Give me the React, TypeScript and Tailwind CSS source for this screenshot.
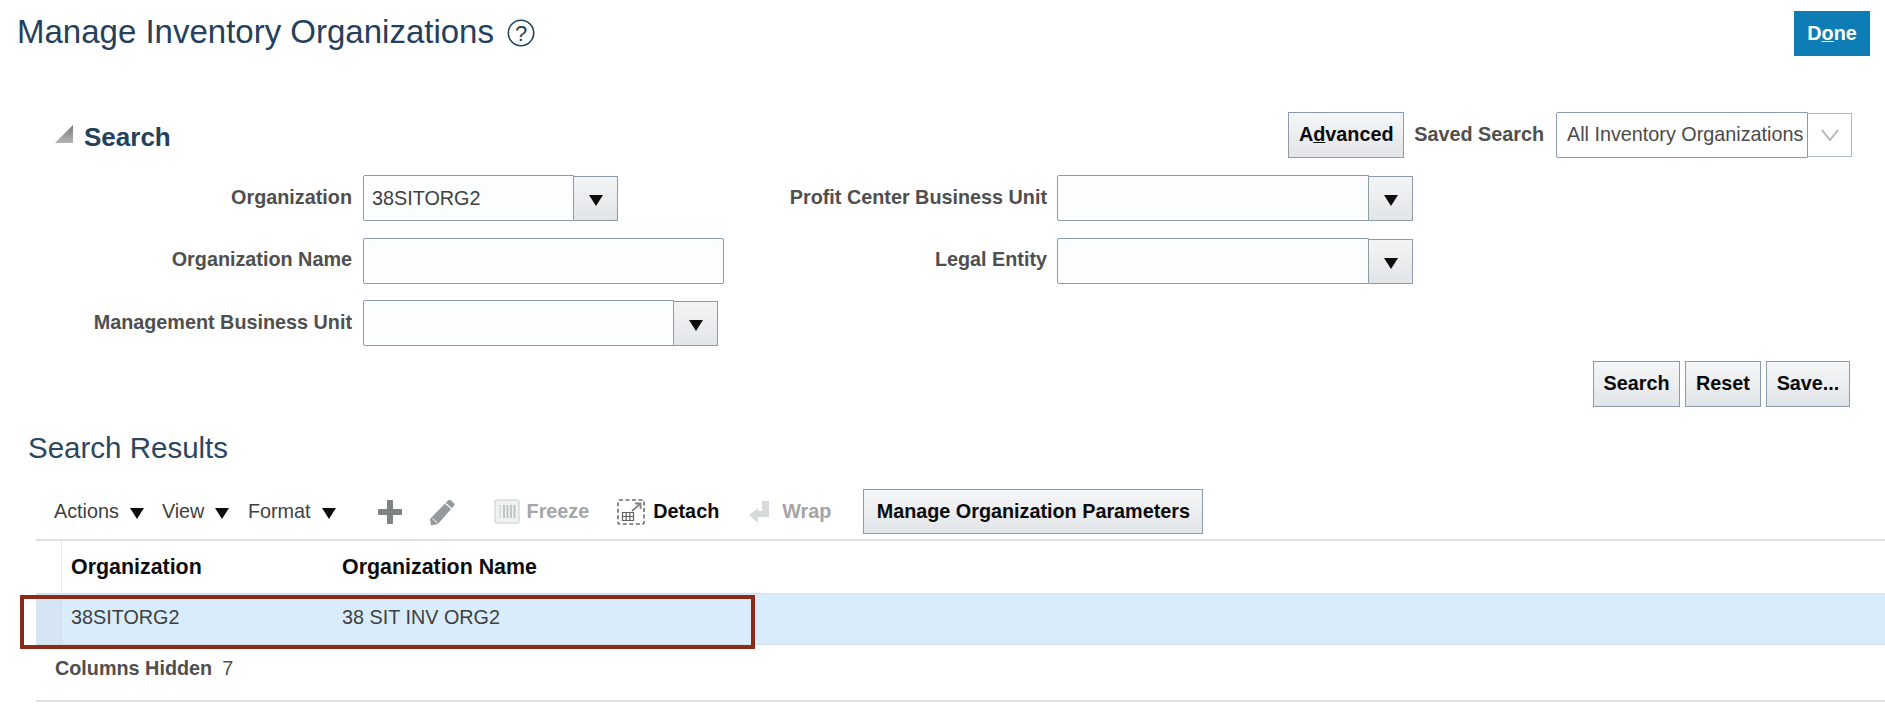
import type { ReactNode } from "react"

const btn =
  "flex items-center justify-center border border-[#8b9bab] bg-gradient-to-b from-[#f5f6f7] to-[#e2e5e8] text-[19.8px] font-bold text-[#0a0a0a]"

function Caret({ className = "" }: { className?: string }) {
  return (
    <svg width="14" height="11" viewBox="0 0 14 11" className={className}>
      <polygon points="0,0 14,0 7,11" fill="#0c0c0c" />
    </svg>
  )
}

function Combo({ inputW, value = "" }: { inputW: string; value?: string }) {
  return (
    <div className="flex h-[46px] items-center">
      <input
        readOnly
        defaultValue={value}
        className={`h-[46px] ${inputW} rounded-l-[2px] border border-[#8b9bab] bg-[#fbfdfe] px-2 text-[19.8px] text-[#3f3f3f]`}
      />
      <div className="flex h-[45px] w-[44px] items-center justify-center border border-l-0 border-[#8b9bab] bg-gradient-to-b from-[#f3f4f5] to-[#e2e5e8]">
        <Caret className="mt-1" />
      </div>
    </div>
  )
}

function Field({
  label,
  labelW,
  children,
  className = "",
}: {
  label: string
  labelW: string
  children: ReactNode
  className?: string
}) {
  return (
    <div className={`flex h-[46px] items-center gap-[11px] ${className}`}>
      <label className={`${labelW} text-right text-[19.8px] font-bold text-[#4f4f4f]`}>{label}</label>
      {children}
    </div>
  )
}

function Menu({ label }: { label: string }) {
  return (
    <span className="flex items-center gap-[11px] text-[19.8px] text-[#3f3f3f]">
      {label}
      <Caret className="mt-1" />
    </span>
  )
}

export default function App() {
  return (
    <div className="h-[724px] w-full overflow-hidden bg-white font-['Liberation_Sans',Arial,sans-serif]">
      {/* Page header */}
      <div className="flex h-[56px] items-start justify-between pl-[17px] pr-[15px] pt-[11px]">
        <div className="flex items-center gap-[13px]">
          <h1 className="-mt-[2px] text-[33px] leading-[45px] font-normal text-[#24405c]">
            Manage Inventory Organizations
          </h1>
          <svg width="28" height="28" viewBox="0 0 28 28">
            <circle cx="14" cy="14" r="12.7" fill="none" stroke="#24405c" strokeWidth="1.6" />
            <text x="14" y="21.5" textAnchor="middle" fontSize="22" fill="#24405c" fontFamily="Liberation Sans">
              ?
            </text>
          </svg>
        </div>
        <button className="h-[45px] w-[76px] bg-[#0f7db5] text-[19.8px] font-bold text-white">
          D<span className="underline">o</span>ne
        </button>
      </div>

      {/* Search */}
      <div className="mt-[56px] flex h-[46px] items-center justify-between pl-[55px] pr-[33px]">
        <div className="flex h-[46px] items-center gap-[11px]">
          <svg width="18" height="18" viewBox="0 0 18 18" className="-mt-[2px]">
            <defs>
              <linearGradient id="tri" x1="0" y1="0" x2="0" y2="1">
                <stop offset="0" stopColor="#7a7a7a" />
                <stop offset="1" stopColor="#b4b4b4" />
              </linearGradient>
            </defs>
            <polygon points="18,0 18,18 0,18" fill="url(#tri)" />
          </svg>
          <h2 className="mt-[4px] text-[26px] font-bold text-[#23405c]">Search</h2>
        </div>
        <div className="flex items-center">
          <button className={`${btn} h-[46px] w-[116px]`}>
            A<span className="underline">d</span>vanced
          </button>
          <span className="ml-[10px] text-[19.8px] font-bold text-[#4f4f4f]">Saved Search</span>
          <div className="ml-[12px] flex h-[46px] items-center">
            <div className="flex h-[46px] w-[252px] items-center rounded-l-[2px] border border-[#8b9bab] bg-white pl-[10px] text-[19.8px] text-[#4a4a4a]">
              All Inventory Organizations
            </div>
            <div className="flex h-[44px] w-[44px] items-center justify-center border border-l-0 border-[#a9b5c0]">
              <svg width="20" height="14" viewBox="0 0 20 14">
                <path d="M2 2 L10 12 L18 2" fill="none" stroke="#b0b8bf" strokeWidth="2" />
              </svg>
            </div>
          </div>
        </div>
      </div>

      <div className="mt-[17px] flex">
        <div className="flex w-[740px] flex-col gap-[16px]">
          <Field label="Organization" labelW="w-[352px]" className="mb-[1px]">
            <Combo inputW="w-[211px]" value="38SITORG2" />
          </Field>
          <Field label="Organization Name" labelW="-mt-[2px] w-[352px]">
            <input readOnly className="h-[46px] w-[361px] rounded-[2px] border border-[#8b9bab] bg-[#fbfdfe]" />
          </Field>
          <Field label="Management Business Unit" labelW="w-[352px]">
            <Combo inputW="w-[311px]" />
          </Field>
        </div>
        <div className="flex flex-col gap-[16px]">
          <Field label="Profit Center Business Unit" labelW="w-[307px] -mr-px" className="mb-[1px]">
            <Combo inputW="w-[312px]" />
          </Field>
          <Field label="Legal Entity" labelW="-mt-[2px] w-[307px] -mr-px">
            <Combo inputW="w-[312px]" />
          </Field>
        </div>
      </div>

      <div className="mt-[15px] flex justify-end gap-[5px] pr-[35px]">
        <button className={`${btn} h-[46px] w-[87px]`}>Search</button>
        <button className={`${btn} h-[46px] w-[76px]`}>Reset</button>
        <button className={`${btn} h-[46px] w-[84px]`}>Save...</button>
      </div>

      {/* Search Results */}
      <h2 className="mt-[24px] pl-[28px] text-[29.5px] leading-[33px] font-normal text-[#2a475f]">Search Results</h2>

      <div className="ml-[36px] mt-[25px]">
        <div className="flex h-[50px] items-start pl-[18px]">
          <div className="flex h-[45px] items-center">
            <Menu label="Actions" />
            <span className="w-[18px]" />
            <Menu label="View" />
            <span className="w-[18.500px]" />
            <Menu label="Format" />
            <svg width="26" height="26" viewBox="0 0 26 26" className="ml-[41px]">
              <path
                d="M10 2a1 1 0 0 1 1-1h4a1 1 0 0 1 1 1v8h8a1 1 0 0 1 1 1v4a1 1 0 0 1-1 1h-8v8a1 1 0 0 1-1 1h-4a1 1 0 0 1-1-1v-8H2a1 1 0 0 1-1-1v-4a1 1 0 0 1 1-1h8z"
                fill="#7f8283"
              />
            </svg>
            <svg width="28" height="28" viewBox="0 0 28 28" className="ml-[25px]">
              <path d="M20 2.500a2 2 0 0 1 2.800-.2l3 2.600a2 2 0 0 1 .2 2.800L10 26l-7 1.500L2 21z" fill="#969a9c" />
              <path d="M17.500 5.500l6 5" stroke="#fff" strokeWidth="1.200" />
              <path d="M4.500 20.500l5 4.500" stroke="#fff" strokeWidth="1" />
            </svg>
            <svg width="26" height="25" viewBox="0 0 26 25" className="ml-[38px]">
              <rect x="1" y="1" width="24" height="23" rx="2" fill="#f0f1f1" stroke="#d9dbdb" strokeWidth="1.500" />
              <path d="M6 6v13" stroke="#cfd2d2" strokeWidth="1.500" strokeDasharray="2 1" />
              <path d="M10 6v13M13.500 6v13M17 6v13M20.500 6v13" stroke="#bcbfbf" strokeWidth="1.800" />
            </svg>
            <span className="ml-[7px] text-[19.8px] font-bold text-[#a3a5a6]">Freeze</span>
            <svg width="28" height="26" viewBox="0 0 28 26" className="ml-[28px]">
              <rect x="1" y="1" width="26" height="24" rx="1" fill="none" stroke="#6a6d6e" strokeWidth="1.600" strokeDasharray="4 2.500" />
              <path d="M15 12l8-7" fill="none" stroke="#7f8283" strokeWidth="1.800" />
              <path d="M18 4.500h5.500v5.500" fill="none" stroke="#7f8283" strokeWidth="1.800" />
              <path d="M5.500 13.500h11v8h-11zM5.500 17.500h11M9.200 13.500v8M12.900 13.500v8" fill="none" stroke="#5f6263" strokeWidth="1.200" />
            </svg>
            <span className="ml-[8px] text-[19.8px] font-bold text-[#0c0c0c]">Detach</span>
            <svg width="22" height="24" viewBox="0 0 22 24" className="ml-[29px]">
              <path d="M14 1h7v16H10v6L1 15l9-7v3h4z" fill="#d8dada" />
            </svg>
            <span className="ml-[12px] text-[19.8px] font-bold text-[#a3a5a6]">Wrap</span>
          </div>
          <button className={`${btn} ml-[32px] h-[45px] w-[340px]`}>Manage Organization Parameters</button>
        </div>

        {/* Table */}
        <div className="flex h-[54px] border-t-2 border-[#e0e0e0]">
          <div className="w-[26px] border-r border-[#e8e8e8]" />
          <div className="flex flex-1 items-center pl-[9px] text-[21.4px] font-bold text-[#0c0c0c]">
            <span className="w-[271px]">Organization</span>
            <span>Organization Name</span>
          </div>
        </div>
        <div className="relative flex h-[52px] border-y border-[#d6dee6] bg-[#d9ecfc]">
          <div className="w-[26px] border-r border-[#d0dfec] bg-[#d5e5f3]" />
          <div className="flex flex-1 items-center pb-[2px] pl-[9px] text-[19.8px] text-[#3f3f3f]">
            <span className="w-[271px]">38SITORG2</span>
            <span>38 SIT INV ORG2</span>
          </div>
          <div className="absolute left-[-16px] top-[1px] h-[54px] w-[735px] border-[4px] border-[#8b2a18]" />
        </div>
        <div className="flex h-[57px] items-start gap-[10px] border-b-2 border-[#e0e0e0] pl-[19px] pt-[11px] text-[19.8px] leading-[24px] text-[#4f4f4f]">
          <span className="font-bold">Columns Hidden</span>
          <span>7</span>
        </div>
      </div>
    </div>
  )
}
